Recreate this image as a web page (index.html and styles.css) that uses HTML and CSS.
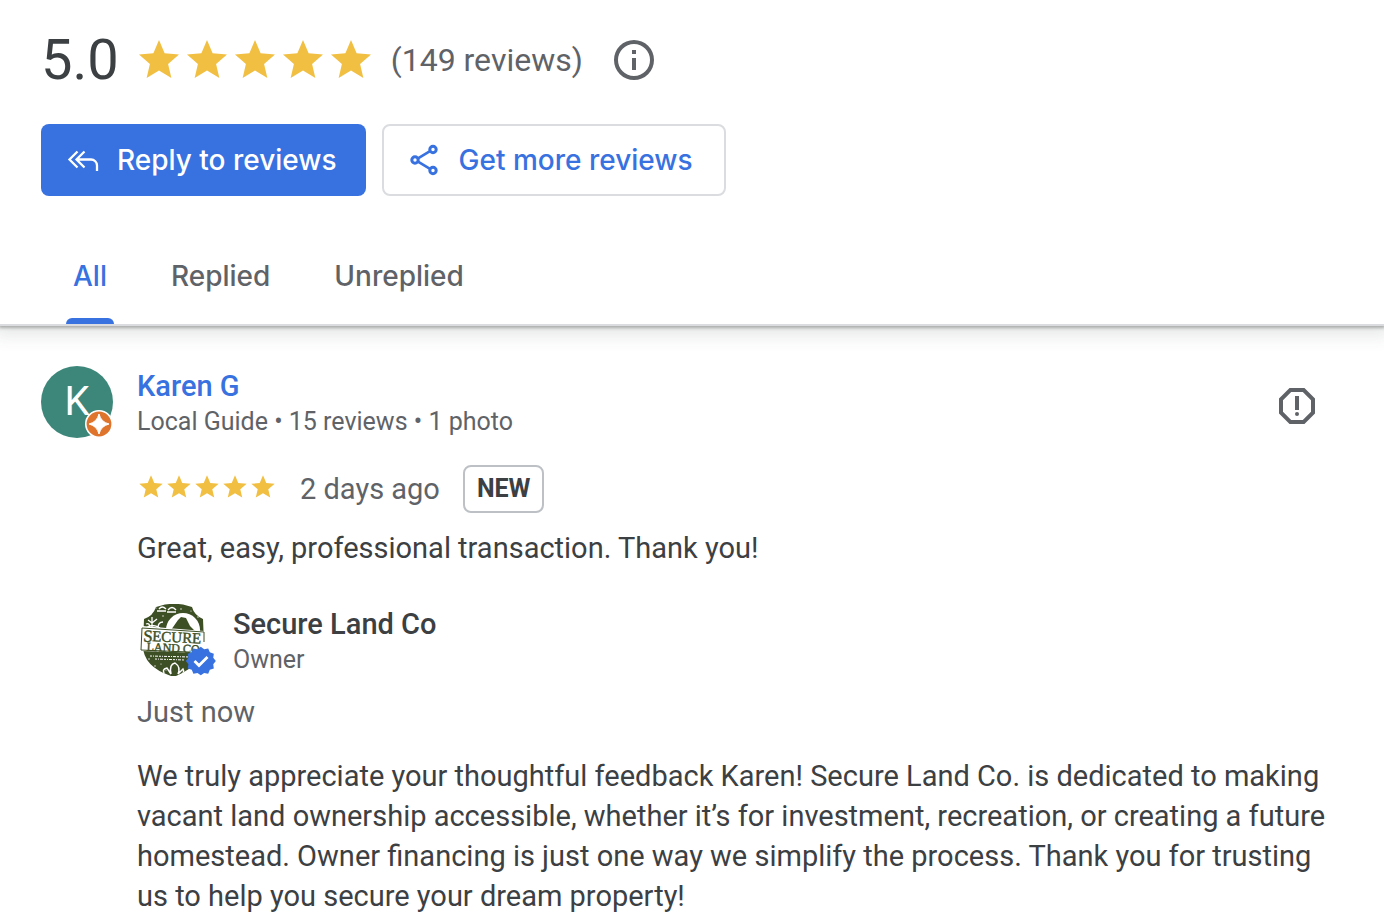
FILE: index.html
```html
<!DOCTYPE html>
<html lang="en">
<head>
<meta charset="utf-8">
<meta name="viewport" content="width=device-width, initial-scale=1">
<title>Reviews</title>
<link rel="stylesheet" href="styles.css">
</head>
<body>
<svg class="defs" aria-hidden="true">
  <symbol id="star" viewBox="0 0 24 24"><path d="M12 17.27 18.18 21l-1.64-7.03L22 9.24l-7.19-.61L12 2 9.19 8.63 2 9.24l5.46 4.73L5.82 21z"/></symbol>
</svg>
<header class="header">
  <div class="summary">
    <span class="score">5.0</span>
    <span class="stars stars-large" role="img" aria-label="5 out of 5 stars">
      <svg><use href="#star"/></svg><svg><use href="#star"/></svg><svg><use href="#star"/></svg><svg><use href="#star"/></svg><svg><use href="#star"/></svg>
    </span>
    <span class="count">(149 reviews)</span>
    <button class="icon-button" type="button" aria-label="About ratings">
      <svg viewBox="0 0 24 24" fill="currentColor"><path d="M11 7h2v2h-2zm0 4h2v6h-2zm1-9a10 10 0 1 0 0 20 10 10 0 0 0 0-20m0 18a8 8 0 1 1 0-16 8 8 0 0 1 0 16"/></svg>
    </button>
  </div>
  <div class="actions">
    <button class="button button-primary" type="button">
      <svg viewBox="0 0 32 32" fill="none" stroke="currentColor" stroke-width="2.300"><path d="M10.500 7.500 2.500 15.500l8 8M17.500 7.500l-8 8 8 8M10 15.500h14a6 6 0 0 1 6 6V27"/></svg>
      Reply to reviews
    </button>
    <button class="button button-outline" type="button">
      <svg viewBox="0 0 32 32" fill="none" stroke="currentColor" stroke-width="3"><circle cx="6" cy="16" r="3.200"/><circle cx="24" cy="5.500" r="3.200"/><circle cx="24" cy="26.500" r="3.200"/><path d="M9 14.400 21 7.200M9 17.600l12 7.200" stroke-width="2.600"/></svg>
      Get more reviews
    </button>
  </div>
  <nav class="tabs" role="tablist" aria-label="Filter reviews">
    <button class="tab tab-active" type="button" role="tab" aria-selected="true">All</button>
    <button class="tab" type="button" role="tab" aria-selected="false">Replied</button>
    <button class="tab" type="button" role="tab" aria-selected="false">Unreplied</button>
  </nav>
</header>
<main class="review">
  <div class="avatar">
    <span class="initial">K</span>
    <svg class="guide-badge" viewBox="0 0 28 28" aria-hidden="true"><circle cx="14" cy="14" r="13.200" fill="#df742c" stroke="#fff" stroke-width="1.600"/><path d="M14 4Q16 12 24 14 16 16 14 24 12 16 4 14 12 12 14 4z" fill="#fff" stroke="#fff" stroke-width="1"/></svg>
  </div>
  <div class="body">
    <div class="person">
      <div class="identity">
        <a class="name" href="#">Karen G</a>
        <span class="meta">Local Guide • 15 reviews • 1 photo</span>
      </div>
      <button class="icon-button" type="button" aria-label="Report review">
        <svg viewBox="0 0 24 24" fill="currentColor"><path d="M15.730 3H8.270L3 8.270v7.460L8.270 21h7.460L21 15.730V8.270zM19 14.900 14.900 19H9.100L5 14.900V9.100L9.100 5h5.800L19 9.100z"/><circle cx="12" cy="16" r="1"/><path d="M11 7h2v7h-2z"/></svg>
      </button>
    </div>
    <div class="rating">
      <span class="stars stars-small" role="img" aria-label="5 out of 5 stars">
        <svg><use href="#star"/></svg><svg><use href="#star"/></svg><svg><use href="#star"/></svg><svg><use href="#star"/></svg><svg><use href="#star"/></svg>
      </span>
      <span class="date">2 days ago</span>
      <span class="new">NEW</span>
    </div>
    <p class="text">Great, easy, professional transaction. Thank you!</p>
    <div class="owner">
      <svg class="logo" viewBox="0 0 80 72" role="img" aria-label="Secure Land Co, verified">
        <defs><clipPath id="shield"><path d="M19 3Q37-4 55 3 57 11 66 15L67 39Q67 60 39 72H34Q5 62 6 40L7 15Q16 12 19 3z"/></clipPath></defs>
        <g clip-path="url(#shield)">
          <rect width="80" height="74" fill="#3d4f25"/>
          <circle cx="46" cy="26" r="17" fill="#fff"/>
          <path d="m25 28 5-3 4 1 7-10 3-3 5 1 4 8 7 7v5H25z" fill="#3d4f25"/>
          <path d="M22 5q3-4 7 0M31 6q4-5 8 0M20 7h9M30 8h9" fill="none" stroke="#fff" stroke-width="1.300"/>
          <path d="M9 20q4-2 4 5M15 24V13M15 19l-4-3M15 19l5-4M21 24q0-6 5-6M9 24q6-5 14 0" fill="none" stroke="#fff" stroke-width="1.300"/>
          <g fill="#fff"><circle cx="14" cy="10" r=".6"/><circle cx="19" cy="4" r=".6"/><circle cx="26" cy="12" r=".7"/><circle cx="44" cy="5" r=".7"/><circle cx="54" cy="7" r=".6"/><circle cx="61" cy="13" r=".7"/><circle cx="12" cy="55" r=".7"/><circle cx="18" cy="62" r=".7"/><circle cx="29" cy="66" r=".6"/><circle cx="24" cy="60" r=".6"/></g>
          <path d="M28 71q-4-6 2-7l4 6q-2-10 4-11 6 4 3 11l5-5q2 4-2 6" fill="none" stroke="#fff" stroke-width="1.500"/>
        </g>
        <path d="m5 22 62 5v22l-63-2z" fill="#fff"/>
        <path d="M5 24 67 28V38M5 24 4 46l48 2" fill="none" stroke="#3d4f25" stroke-width="1"/>
        <path d="m13 52 40 1M18 55l30 1" stroke="#fff" stroke-width="1" stroke-dasharray="2 1 1 1 3 1"/>
        <g fill="#3d4f25" stroke="#3d4f25" stroke-width=".4" font-family="Liberation Serif, serif" transform="rotate(3 36 36)">
          <text x="6" y="39" font-size="17">S</text><text x="15" y="38" font-size="15">ECURE</text>
          <text x="10" y="48" font-size="12">LAND CO.</text>
        </g>
        <path d="m64 43 3.500 2.600 4.300-.8 1.700 4 4.200 1.500-.6 4.300 2.700 3.400-2.700 3.400.6 4.300-4.200 1.500-1.700 4-4.300-.8L64 73l-3.500-2.600-4.300.8-1.700-4-4.200-1.500.6-4.300-2.700-3.400 2.700-3.400-.6-4.300 4.200-1.500 1.700-4 4.300.8z" fill="#3871e0" transform="translate(3 2) scale(.95)"/>
        <path d="m57.500 57 4.500 4.500 8.500-8.500" fill="none" stroke="#fff" stroke-width="2.800"/>
      </svg>
      <div class="identity">
        <span class="name owner-name">Secure Land Co</span>
        <span class="meta">Owner</span>
      </div>
    </div>
    <p class="reply-date">Just now</p>
    <p class="text reply">We truly appreciate your thoughtful feedback Karen! Secure Land Co. is dedicated to making vacant land ownership accessible, whether it’s for investment, recreation, or creating a future homestead. Owner financing is just one way we simplify the process. Thank you for trusting us to help you secure your dream property!</p>
  </div>
</main>
</body>
</html>
```
FILE: styles.css
```css
* { box-sizing: border-box; }
body {
  margin: 0;
  background: #fff;
  color: #3c4043;
  font-family: Roboto, "Liberation Sans", sans-serif;
  font-size: 29px;
  line-height: 40px;
}
button { margin: 0; font: inherit; cursor: pointer; }
p { margin: 0; }
svg { display: block; flex: none; }
.defs { position: absolute; width: 0; height: 0; }

.header {
  padding-top: 28px;
  border-bottom: 2px solid #dadce0;
  box-shadow: 0 1px 3px 1px #a8abaa, 0 4px 16px 6px rgba(60, 67, 64, .12);
}
.summary { display: flex; align-items: center; height: 64px; padding: 0 41px; }
.score { font-size: 56px; line-height: 64px; }
.stars { display: flex; fill: #f1bf42; }
.stars-large { margin-left: 16px; }
.stars-large svg { width: 48px; height: 48px; }
.stars-small { padding-bottom: 4px; }
.stars-small svg { width: 28px; height: 28px; }
.count { margin: 0 27px 0 16px; font-size: 32px; color: #5f6368; }
.icon-button { padding: 0; border: 0; background: none; color: #5f6368; }
.icon-button svg { width: 48px; height: 48px; }

.actions { display: flex; gap: 16px; padding: 32px 41px; }
.button {
  display: flex;
  align-items: center;
  gap: 18px;
  height: 72px;
  padding: 0 29px 0 26px;
  border: 0;
  border-radius: 8px;
  font-family: Inter, Roboto, sans-serif;
  font-weight: 500;
  font-size: 28px;
}
.button svg { width: 32px; height: 32px; }
.button-primary { background: #3871e0; color: #fff; }
.button-outline { padding-right: 31px; padding-left: 25px; border: 2px solid #dadce0; background: #fff; color: #3871e0; }

.tabs { display: flex; height: 96px; padding: 0 41px; }
.tab {
  position: relative;
  padding: 0 32px;
  border: 0;
  background: none;
  color: #5f6368;
  font-family: Inter, Roboto, sans-serif;
  font-weight: 500;
  font-size: 28px;
}
.tab-active { color: #3871e0; }
.tab-active::after {
  content: "";
  position: absolute;
  right: 25px;
  bottom: 0;
  left: 25px;
  height: 6px;
  border-radius: 6px 6px 0 0;
  background: #3871e0;
}

.review { display: flex; gap: 24px; padding: 40px 56px 8px 41px; }
.avatar {
  position: relative;
  flex: none;
  display: grid;
  place-items: center;
  width: 72px;
  height: 72px;
  border-radius: 50%;
  background: #3c8779;
  color: #fff;
}
.initial { font-size: 40px; }
.guide-badge { position: absolute; right: 0; bottom: 0; width: 28px; height: 28px; }
.body { flex: 1; min-width: 0; }
.person { display: flex; align-items: center; justify-content: space-between; height: 80px; padding-right: 7px; }
.identity { display: flex; flex-direction: column; height: 80px; }
.name { font-weight: 500; line-height: 40px; text-decoration: none; color: #3871e0; }
.owner-name { color: #3c4043; }
.meta { font-size: 25px; line-height: 32px; color: #5f6368; }
.rating { display: flex; align-items: center; margin-top: 19px; }
.date { margin: 0 23px; color: #5f6368; }
.new {
  padding: 2px 12px;
  border: 2px solid #bdc1c6;
  border-radius: 8px;
  font-size: 25px;
  font-weight: 700;
}
.text { margin-top: 15px; }
.owner { display: flex; gap: 16px; height: 72px; margin-top: 36px; }
.logo { width: 80px; height: 72px; overflow: visible; }
.reply-date { margin-top: 16px; color: #5f6368; }
.reply { margin-top: 24px; }
```
